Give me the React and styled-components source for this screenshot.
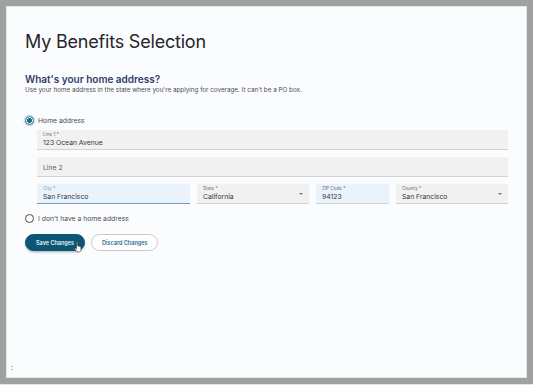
import React from "react";
import styled, { createGlobalStyle } from "styled-components";

const Global = createGlobalStyle`
  html, body { margin: 0; padding: 0; background: #e9ebeb; }
  body { font-family: Inter, "Noto Sans", sans-serif; }
  * { box-sizing: border-box; }
`;

const Frame = styled.div`
  width: 533px;
  height: 385px;
  background: #9ea3a2;
  padding: 6px 6px 6px 6px;
  border-bottom: 1px solid #e4e6e6;
`;

const Panel = styled.div`
  position: relative;
  height: 100%;
  background: #fbfcfe;
  border: 1px solid #e2e4e6;
  padding: 24px 18px 0 18px;
  display: flex;
  flex-direction: column;
  align-items: stretch;
`;

const Title = styled.h1`
  margin: 0;
  font-family: Inter, sans-serif;
  font-weight: 400;
  font-size: 18px;
  line-height: 22px;
  color: #25262b;
  letter-spacing: -0.2px;
`;

const Heading = styled.h2`
  margin: 20px 0 0;
  font-size: 10px;
  line-height: 13px;
  font-weight: 600;
  color: #2f3c68;
`;

const Sub = styled.p`
  margin: 0;
  font-size: 6.3px;
  line-height: 8px;
  color: #4a4d55;
`;

const RadioRow = styled.label`
  display: flex;
  align-items: center;
  gap: 4px;
  height: 10px;
  margin-top: ${(p) => p.$mt}px;
  font-size: 6.8px;
  color: #4b4d53;
`;

const RadioDot = styled.span`
  width: 9px;
  height: 9px;
  border-radius: 50%;
  flex: none;
  border: 1.2px solid ${(p) => (p.$on ? "#1f6b8e" : "#45484d")};
  background: ${(p) => (p.$on ? "radial-gradient(circle, #1f6b8e 0 2.2px, #fff 2.6px)" : "#fff")};
  box-shadow: ${(p) => (p.$on ? "0 0 0 1.5px #cfe3ee" : "none")};
`;

const Fields = styled.div`
  margin-left: 12px;
  margin-top: 5px;
  display: flex;
  flex-direction: column;
  gap: 7px;
`;

const Row = styled.div`
  display: grid;
  grid-template-columns: 153fr 112fr 73fr 112fr;
  gap: 7px;
`;

const Field = styled.div`
  position: relative;
  height: 20px;
  background: ${(p) => (p.$active ? "#eaf2fc" : "#f1f1f2")};
  border-bottom: ${(p) => (p.$focus ? "1.5px solid #6f9fb9" : "1px solid #cfd1d3")};
  padding: 2px 6px 0;
  display: flex;
  flex-direction: column;
  justify-content: ${(p) => (p.$empty ? "center" : "flex-start")};
`;

const Label = styled.span`
  font-size: 4.6px;
  line-height: 6px;
  color: ${(p) => (p.$focus ? "#6f9fbf" : "#6d6f74")};
`;

const Value = styled.span`
  font-size: 6.8px;
  line-height: 10px;
  color: ${(p) => (p.$placeholder ? "#5a5c61" : "#34363b")};
`;

const Arrow = styled.span`
  position: absolute;
  right: 6px;
  top: 9px;
  width: 0;
  height: 0;
  border-left: 2.2px solid transparent;
  border-right: 2.2px solid transparent;
  border-top: 2.5px solid #77797e;
`;

const Buttons = styled.div`
  display: flex;
  gap: 6px;
  margin-top: 11px;
  position: relative;
`;

const Button = styled.button`
  height: 17px;
  padding: 0 10px;
  border-radius: 9px;
  font-family: Inter, sans-serif;
  font-size: 5.5px;
  font-weight: 600;
  cursor: pointer;
  border: ${(p) => (p.$primary ? "1px solid #0c5675" : "1px solid #c6cacd")};
  background: ${(p) => (p.$primary ? "#0c5675" : "#fff")};
  color: ${(p) => (p.$primary ? "#e9f2f6" : "#2c6f90")};
  box-shadow: ${(p) => (p.$primary ? "0 1.5px 2px rgba(0,0,0,0.25)" : "none")};
`;

const Cursor = styled.svg`
  position: absolute;
  left: 49px;
  top: 7px;
`;

const Grip = styled.div`
  position: absolute;
  left: 4px;
  bottom: 7px;
  display: flex;
  flex-direction: column;
  gap: 1.5px;
  span {
    width: 2px;
    height: 1.5px;
    background: #a9c3c1;
  }
`;

export default function App() {
  return (
    <>
      <Global />
      <Frame>
        <Panel>
          <Title>My Benefits Selection</Title>
          <Heading>What's your home address?</Heading>
          <Sub>Use your home address in the state where you're applying for coverage. It can't be a PO box.</Sub>
          <RadioRow $mt={21}>
            <RadioDot $on />
            Home address
          </RadioRow>
          <Fields>
            <Field>
              <Label>Line 1 *</Label>
              <Value>123 Ocean Avenue</Value>
            </Field>
            <Field $empty>
              <Value $placeholder>Line 2</Value>
            </Field>
            <Row>
              <Field $active $focus>
                <Label $focus>City *</Label>
                <Value>San Francisco</Value>
              </Field>
              <Field>
                <Label>State *</Label>
                <Value>California</Value>
                <Arrow />
              </Field>
              <Field $active>
                <Label>ZIP Code *</Label>
                <Value>94123</Value>
              </Field>
              <Field>
                <Label>County *</Label>
                <Value>San Francisco</Value>
                <Arrow />
              </Field>
            </Row>
          </Fields>
          <RadioRow $mt={9}>
            <RadioDot />
            I don't have a home address
          </RadioRow>
          <Buttons>
            <Button $primary>Save Changes</Button>
            <Button>Discard Changes</Button>
            <Cursor width="9" height="12" viewBox="0 0 18 24">
              <path
                d="M5 2.5c0-1.2 2.2-1.2 2.2 0V10c0-1.2 2.2-1.2 2.2 0v1c0-1.2 2.2-1.2 2.2 0v1c0-1.2 2.2-1.2 2.2 0v5.5c0 2.5-1.6 4.5-4.3 4.5H8c-1.6 0-2.6-.7-3.4-1.8L1.3 15.6c-.7-1 .5-2.2 1.5-1.4L5 16V2.5z"
                fill="#fff"
                stroke="#222"
                strokeWidth="1.1"
                strokeLinejoin="round"
              />
            </Cursor>
          </Buttons>
          <Grip>
            <span />
            <span />
          </Grip>
        </Panel>
      </Frame>
    </>
  );
}
